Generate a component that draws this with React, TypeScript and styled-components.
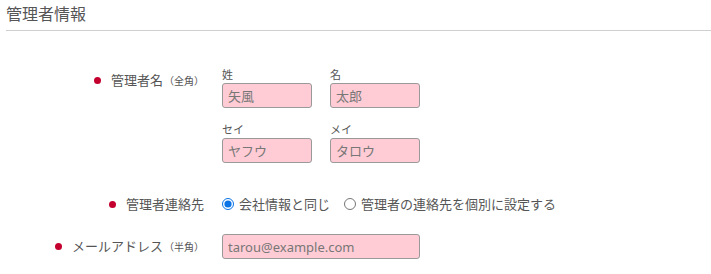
import styled, { createGlobalStyle } from "styled-components";

const GlobalStyle = createGlobalStyle`
  body {
    margin: 0;
    background: #fff;
    font-family: "Noto Sans", "Noto Sans CJK JP", sans-serif;
    color: #555;
  }
`

const Page = styled.div`
  width: 711px;
  padding-left: 6px;
  box-sizing: border-box;
`

const Title = styled.h2`
  margin: 0;
  padding: 2px 0 4px;
  font-size: 16px;
  line-height: 24px;
  font-weight: normal;
  color: #555;
  border-bottom: 1px solid #cfcfcf;
`

const Form = styled.div`
  display: flex;
  flex-direction: column;
  padding-top: 37px;
`

const Row = styled.div<{ $top?: boolean; $gap: number }>`
  display: flex;
  align-items: ${({ $top }) => ($top ? "flex-start" : "center")};
  gap: 18px;
  margin-bottom: ${({ $gap }) => $gap}px;
`

const Label = styled.div<{ $pad?: number }>`
  width: 198px;
  display: flex;
  justify-content: flex-end;
  align-items: center;
  gap: 10px;
  font-size: 13px;
  line-height: 20px;
  padding-top: ${({ $pad }) => $pad ?? 0}px;
  white-space: nowrap;
`

const Dot = styled.span`
  width: 7px;
  height: 7px;
  border-radius: 50%;
  background: #c4002f;
  flex: none;
`

const Note = styled.span`
  font-size: 10px;
  margin-left: 1px;
`

const NameGrid = styled.div`
  display: grid;
  grid-template-columns: 90px 90px;
  column-gap: 18px;
  row-gap: 15px;
`

const Field = styled.div`
  display: flex;
  flex-direction: column;
  gap: 1px;
`

const SubLabel = styled.span`
  font-size: 11px;
  line-height: 14px;
  color: #555;
`

const TextBox = styled.input<{ $width: number }>`
  box-sizing: border-box;
  width: ${({ $width }) => $width}px;
  height: 25px;
  margin: 0;
  padding: 0 5px;
  border: 1px solid #9a9a9a;
  border-radius: 3px;
  background: #ffccd5;
  color: #777;
  font-family: "Noto Sans", "Noto Sans CJK JP", sans-serif;
  font-size: 13px;
  outline: none;
`

const RadioGroup = styled.div`
  display: flex;
  align-items: center;
  gap: 14px;
  font-size: 13px;
  line-height: 20px;
`

const RadioLabel = styled.label`
  display: flex;
  align-items: center;
  gap: 5px;
  white-space: nowrap;
`

const Radio = styled.input`
  width: 12px;
  height: 12px;
  margin: 0;
  accent-color: #0a74e6;
`

export default function App() {
  return (
    <Page>
      <GlobalStyle />
      <Title>管理者情報</Title>
      <Form>
        <Row $top $gap={31}>
          <Label $pad={2}>
            <Dot />
            <span>
              管理者名<Note>（全角）</Note>
            </span>
          </Label>
          <NameGrid>
            <Field>
              <SubLabel>姓</SubLabel>
              <TextBox $width={90} defaultValue="矢風" />
            </Field>
            <Field>
              <SubLabel>名</SubLabel>
              <TextBox $width={90} defaultValue="太郎" />
            </Field>
            <Field>
              <SubLabel>セイ</SubLabel>
              <TextBox $width={90} defaultValue="ヤフウ" />
            </Field>
            <Field>
              <SubLabel>メイ</SubLabel>
              <TextBox $width={90} defaultValue="タロウ" />
            </Field>
          </NameGrid>
        </Row>
        <Row $gap={20}>
          <Label>
            <Dot />
            <span>管理者連絡先</span>
          </Label>
          <RadioGroup>
            <RadioLabel>
              <Radio type="radio" name="contact" defaultChecked />
              会社情報と同じ
            </RadioLabel>
            <RadioLabel>
              <Radio type="radio" name="contact" />
              管理者の連絡先を個別に設定する
            </RadioLabel>
          </RadioGroup>
        </Row>
        <Row $gap={0}>
          <Label>
            <Dot />
            <span>
              メールアドレス<Note>（半角）</Note>
            </span>
          </Label>
          <TextBox $width={198} defaultValue="tarou@example.com" />
        </Row>
      </Form>
    </Page>
  )
}
